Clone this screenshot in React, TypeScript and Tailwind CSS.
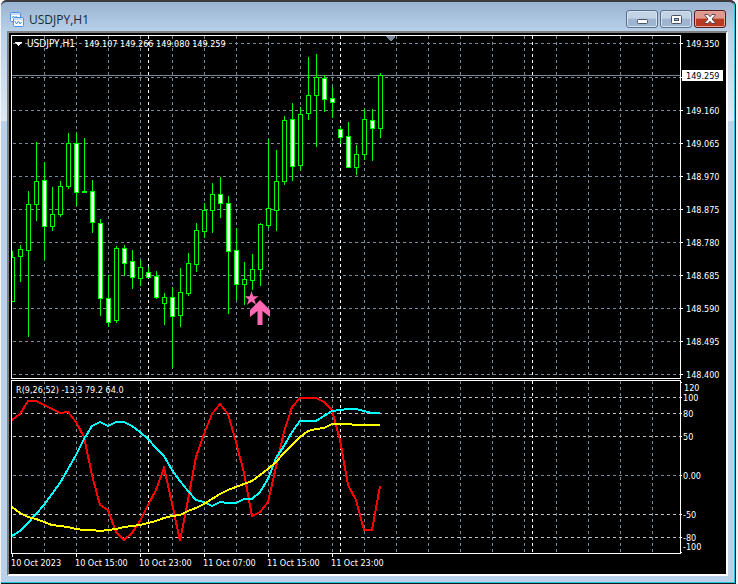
const DASH = '3 3'
const STEP = 8
const GRID = '#778899'

// high, body top, body bottom, low, bearish
const CANDLES: [number, number, number, number, number][] = [
  [251, 257, 301, 301, 0], [245, 249, 256, 281, 0], [191, 204, 250, 336, 0], [142, 181, 204, 220, 0],
  [162, 180, 226, 259, 1], [187, 214, 226, 230, 0], [181, 186, 214, 216, 0], [133, 143, 186, 188, 0],
  [133, 143, 192, 205, 1], [138, 191, 192, 192, 0], [180, 191, 222, 232, 1], [219, 223, 298, 315, 1],
  [275, 298, 322, 326, 1], [246, 248, 320, 322, 0], [245, 248, 263, 275, 1], [250, 261, 277, 288, 1],
  [260, 267, 278, 285, 0], [267, 272, 277, 277, 1], [271, 276, 297, 298, 1], [293, 297, 303, 324, 0],
  [287, 297, 316, 367, 1], [268, 292, 315, 326, 0], [253, 263, 293, 295, 0], [223, 230, 264, 271, 0],
  [203, 210, 231, 237, 0], [183, 194, 210, 232, 0], [177, 194, 203, 217, 1], [196, 203, 251, 313, 1],
  [228, 250, 284, 299, 1], [262, 279, 284, 304, 0], [254, 269, 280, 289, 0], [223, 224, 269, 285, 0],
  [139, 208, 225, 227, 0], [150, 181, 210, 230, 0], [116, 120, 181, 184, 0], [103, 119, 166, 180, 1],
  [107, 114, 165, 170, 0], [57, 95, 113, 119, 0], [54, 77, 95, 146, 0], [75, 78, 99, 111, 1],
  [87, 98, 102, 117, 1], [127, 129, 137, 143, 1], [122, 136, 167, 167, 1], [145, 154, 167, 174, 0],
  [109, 119, 154, 159, 0], [109, 120, 128, 160, 1], [73, 75, 128, 137, 0],
]

const RED = [
  420, 414, 401, 401, 405, 409, 413, 412, 422, 437, 475, 505, 510, 532, 540, 533, 521, 505, 490, 468, 503, 541,
  500, 457, 434, 414, 404, 414, 442, 473, 516, 512, 502, 467, 432, 407, 398, 398, 398, 402, 410, 440, 485, 500,
  530, 530, 486,
]
const CYAN = [
  536, 531, 523, 514, 505, 494, 483, 469, 455, 439, 426, 422, 426, 422, 422, 426, 432, 439, 448, 456, 470, 481,
  491, 500, 502, 506, 502, 503, 503, 499, 499, 492, 479, 458, 446, 432, 421, 421, 421, 416, 411, 410, 409, 409,
  411, 413, 413,
]
const YELLOW = [
  507, 513, 517, 519, 522, 525, 526, 527, 529, 530, 530, 531, 530, 529, 527, 526, 525, 523, 521, 518, 516, 515,
  511, 508, 504, 499, 494, 490, 487, 484, 481, 475, 469, 462, 453, 445, 437, 431, 429, 428, 424, 424, 424, 425,
  425, 425, 425,
]

const PRICES = [
  { y: 43, label: '149.350' }, { y: 77, label: '' }, { y: 110, label: '149.160' }, { y: 143, label: '149.065' },
  { y: 176, label: '148.970' }, { y: 209, label: '148.875' }, { y: 242, label: '148.780' }, { y: 275, label: '148.685' },
  { y: 308, label: '148.590' }, { y: 341, label: '148.495' }, { y: 374, label: '148.400' },
]

const LEVELS = [
  { y: 397, label: '100', color: '#c0c0c0' },
  { y: 413, label: '80', color: '#c0c0c0' },
  { y: 436, label: '50', color: '#c0c0c0' },
  { y: 475, label: '0.00', color: GRID },
  { y: 514, label: '-50', color: '#c0c0c0' },
  { y: 537, label: '-80', color: '#c0c0c0' },
]

const TIMES = ['10 Oct 2023', '10 Oct 15:00', '10 Oct 23:00', '11 Oct 07:00', '11 Oct 15:00', '11 Oct 23:00']

const COLUMNS = Array.from({ length: 80 }, (_, i) => 44 + i * 32)
const DAYS = [148, 340, 532]

const toPoints = (ys: number[]) => ys.map((y, i) => `${12 + i * STEP},${y}`).join(' ')

function TimeGrid({ top, bottom }: { top: number; bottom: number }) {
  return (
    <g strokeDasharray={DASH}>
      {COLUMNS.map((x) => (
        <line key={x} x1={x + 0.5} x2={x + 0.5} y1={top} y2={bottom} stroke={GRID} />
      ))}
      {DAYS.map((x) => (
        <line key={x} x1={x + 0.5} x2={x + 0.5} y1={top} y2={bottom} stroke="#fff" />
      ))}
    </g>
  )
}

function Candle({ x, data }: { x: number; data: [number, number, number, number, number] }) {
  const [high, top, bottom, low, bearish] = data
  return (
    <g>
      <rect x={x} y={high} width="1" height={low - high + 1} fill="#0f0" />
      <rect x={x - 1.5} y={top + 0.5} width="4" height={bottom - top} fill={bearish ? '#fff' : '#000'} stroke="#0f0" />
    </g>
  )
}

function PriceChart() {
  return (
    <div className="border border-white">
      <svg className="block h-[342px] w-full" shapeRendering="crispEdges" role="img" aria-label="USDJPY price chart">
        <g transform="translate(-12 -36)">
          <g strokeDasharray={DASH} stroke={GRID}>
            {PRICES.map(({ y }) => (
              <line key={y} x1="13" x2="3000" y1={y + 0.5} y2={y + 0.5} />
            ))}
          </g>
          <TimeGrid top={36} bottom={378} />
          <rect x="12" y="75" width="3000" height="1" fill={GRID} />
          <path d="M386 36h9v1l-4 4h-1l-4-4z" fill={GRID} />
          {CANDLES.map((c, i) => (
            <Candle key={i} x={12 + i * STEP} data={c} />
          ))}
          <path d="M15 42h7l-3.5 4z" fill="#fff" />
          <text x="27" y="47" className="fill-white text-[10px]">USDJPY,H1</text>
          <text x="84" y="47" className="fill-white text-[9px]">149.107 149.266 149.080 149.259</text>
          <g fill="#ff69b4" shapeRendering="auto">
            <path d="M251.5 291l1.7 5.2h5.5l-4.4 3.3 1.7 5.3-4.5-3.2-4.5 3.2 1.7-5.3-4.4-3.3h5.5z" />
            <path d="M260 300l10 10v7l-7.5-6V325h-5v-14L250 317v-7z" />
          </g>
        </g>
      </svg>
    </div>
  )
}

function Oscillator() {
  return (
    <div className="border border-white">
      <svg className="block h-[172px] w-full" shapeRendering="crispEdges" role="img" aria-label="R oscillator">
        <g transform="translate(-12 -381)">
          <TimeGrid top={381} bottom={553} />
          {LEVELS.map(({ y, color }) => (
            <line key={y} x1="13" x2="3000" y1={y + 0.5} y2={y + 0.5} stroke={color} strokeDasharray={DASH} />
          ))}
          <g fill="none" strokeWidth="2">
            <polyline points={toPoints(RED)} stroke="#f00" />
            <polyline points={toPoints(CYAN)} stroke="#0ff" />
            <polyline points={toPoints(YELLOW)} stroke="#ff0" />
          </g>
          <text x="16" y="393" className="fill-white text-[9px]">R(9,26,52) -13.3 79.2 64.0</text>
        </g>
      </svg>
    </div>
  )
}

function ValueAxis() {
  return (
    <svg className="block h-[538px] w-[45px] shrink-0" shapeRendering="crispEdges">
      <g transform="translate(-681 -35)" className="fill-white text-[9px]">
        {PRICES.map(({ y, label }) => (
          <g key={y}>
            <rect x="681" y={y} width="2" height="1" />
            {label && <text x="686" y={y + 4}>{label}</text>}
          </g>
        ))}
        <rect x="682" y="70" width="41" height="11" />
        <text x="686" y="79" className="fill-black">149.259</text>
        <rect x="681" y="382" width="1" height="1" />
        <text x="684" y="391">120</text>
        {LEVELS.map(({ y, label }) => (
          <g key={y}>
            <rect x="681" y={y} width="1" height="1" />
            <text x="683" y={y + 4}>{label}</text>
          </g>
        ))}
        <rect x="681" y="552" width="1" height="1" />
        <text x="683" y="550">-100</text>
      </g>
    </svg>
  )
}

function TimeAxis() {
  return (
    <div className="flex h-5">
      {TIMES.map((t) => (
        <div key={t} className="w-16 shrink-0">
          <div className="ml-px h-[3px] w-px bg-white" />
          <div className="text-[9px] leading-3 whitespace-nowrap">{t}</div>
        </div>
      ))}
    </div>
  )
}

const captionButton =
  'flex h-[18px] w-8 items-center justify-center rounded-[3px] border border-[#5d6f88] bg-linear-to-b from-[#c3d3e6] from-45% to-[#9db5d0] to-50% shadow-[inset_0_0_0_1px_#d5e2f0]'

function TitleBar() {
  return (
    <header className="flex h-[29px] items-end pr-2 pb-[3px] pl-[9px]">
      <svg width="15" height="16" viewBox="0 0 15 16" className="shrink-0">
        <rect x="0.5" y="0.5" width="10" height="9" rx="1" fill="#fff" stroke="#4d8ee8" />
        <path d="M1 2h9" stroke="#8db8f2" />
        <path d="M2 6l1.5-2 1.5 2 1.5-2" fill="none" stroke="#4d8ee8" />
        <rect x="3.5" y="5.5" width="10" height="9" rx="1" fill="#fff" stroke="#4d8ee8" />
        <path d="M4 7h9" stroke="#8db8f2" />
        <path d="M5 9l1.5 3 2-3 1.5 3 1.5-2" fill="none" stroke="#4d8ee8" />
      </svg>
      <h1 className="ml-1 flex-1 font-['Open_Sans',sans-serif] text-[12px] leading-4 text-[#1b2733]">USDJPY,H1</h1>
      <div className="flex gap-[2px]">
        <button type="button" aria-label="Minimize" className={captionButton}>
          <svg width="11" height="5" className="mt-1">
            <rect x="0.5" y="0.5" width="10" height="4" rx="1" fill="#fff" stroke="#4a5160" />
          </svg>
        </button>
        <button type="button" aria-label="Maximize" className={captionButton}>
          <svg width="11" height="9">
            <rect x="0.5" y="0.5" width="10" height="8" rx="1" fill="#fff" stroke="#4a5160" />
            <rect x="3.5" y="3.5" width="4" height="2" fill="#9db5d0" stroke="#4a5160" />
          </svg>
        </button>
        <button
          type="button"
          aria-label="Close"
          className="flex h-[18px] w-8 items-center justify-center rounded-[3px] border border-[#5a1a1c] bg-linear-to-b from-[#dd9a8c] from-45% to-[#b93a22] to-50% shadow-[inset_0_0_0_1px_#e2a79b]"
        >
          <svg width="12" height="10">
            <path d="M1 .5h3l2 2.2 2-2.2h3v1L8 5l3 3.5v1H8L6 7.3 4 9.5H1v-1L4 5 1 1.5z" fill="#fff" stroke="#5b3f47" />
          </svg>
        </button>
      </div>
    </header>
  )
}

export default function App() {
  return (
    <main className="bg-[#f4f4f4] pr-[2px] pl-px font-['DejaVu_Sans_Condensed','Noto_Sans',sans-serif] text-white">
      <div className="rounded-t-[6px] border-r border-b border-[#15181c] bg-[#15181c]">
        <div className="rounded-t-[6px] border-t-2 border-r border-b border-t-[#3b3b40] border-r-[#27c4dd] border-b-[#27c4dd] bg-[linear-gradient(to_bottom,#99b4d1_0,#b9d1ea_30px,#dce9f6_119px,#b9d1ea_119px)] pb-[6px]">
          <TitleBar />
          <div className="mx-[6px] border-2 border-t-[#808080] border-r-white border-b-white border-l-[#808080] bg-black pt-[2px] pl-[2px]">
            <div className="flex">
              <div className="min-w-0 flex-1 overflow-hidden">
                <div className="flex flex-col gap-px">
                  <PriceChart />
                  <Oscillator />
                </div>
                <TimeAxis />
              </div>
              <ValueAxis />
            </div>
          </div>
        </div>
      </div>
    </main>
  )
}
